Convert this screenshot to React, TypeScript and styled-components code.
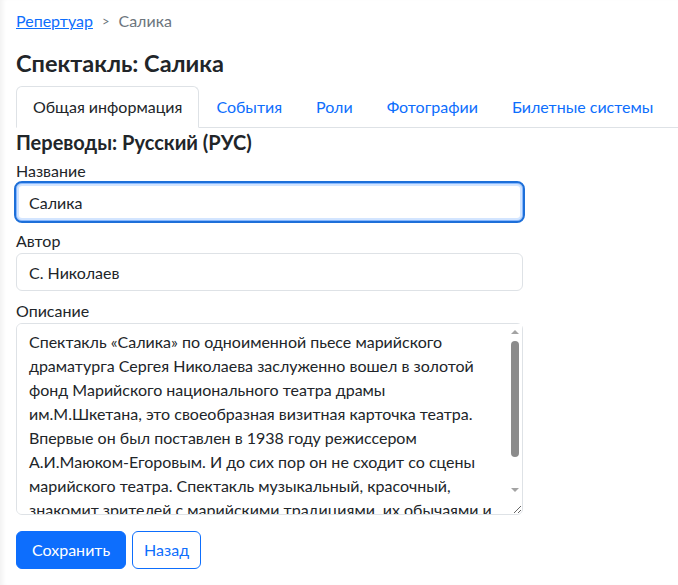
import React from "react";
import styled, { createGlobalStyle } from "styled-components";

const GlobalStyle = createGlobalStyle`
  html, body { margin: 0; padding: 0; background: #fff; }
  body {
    font-family: "Lato", "Liberation Sans", "Noto Sans", sans-serif;
    font-size: 16px;
    line-height: 1.5;
    color: #212529;
  }
  * { box-sizing: border-box; }
`;

const Page = styled.div`
  min-height: 585px;
  padding: 9px 0 16px 16px;
  box-shadow: inset 5px 0 4px -2px #f3f3f3;
`;

const Breadcrumb = styled.nav`
  display: flex;
  align-items: center;
  gap: 9px;
  font-size: 16px;
  line-height: 24px;
  color: #6c757d;
`;

const CrumbLink = styled.a`
  color: #0d6efd;
  text-decoration: underline;
  cursor: pointer;
`;

const Sep = styled.span`
  font-size: 13px;
  color: #6c757d;
`;

const Title = styled.h1`
  margin: 17px 0 9px;
  font-size: 23.5px;
  line-height: 27px;
  font-weight: 700;
  color: #212529;
`;

const Tabs = styled.ul`
  display: flex;
  list-style: none;
  margin: 0;
  padding: 0;
  border-bottom: 1px solid #dee2e6;
`;

const Tab = styled.li<{ $active?: boolean }>`
  margin-bottom: -1px;
  padding: 8px 16px;
  line-height: 24px;
  white-space: nowrap;
  border: 1px solid ${(p) => (p.$active ? "#dee2e6" : "transparent")};
  border-bottom-color: ${(p) => (p.$active ? "#fff" : "transparent")};
  border-radius: 6px 6px 0 0;
  background: ${(p) => (p.$active ? "#fff" : "transparent")};
  color: ${(p) => (p.$active ? "#212529" : "#0d6efd")};
  cursor: pointer;
`;

const Form = styled.form`
  width: 507px;
  display: flex;
  flex-direction: column;
`;

const SectionTitle = styled.h2`
  margin: 2px 0 5px;
  font-size: 20px;
  line-height: 24px;
  font-weight: 700;
`;

const Field = styled.div`
  display: flex;
  flex-direction: column;
  margin-bottom: 8px;
`;

const Label = styled.label`
  line-height: 24px;
`;

const Input = styled.input<{ $focused?: boolean }>`
  height: 38px;
  padding: 6px 12px;
  font: inherit;
  color: #212529;
  border: 1px solid ${(p) => (p.$focused ? "#86b7fe" : "#dee2e6")};
  border-radius: 6px;
  background: #fff;
  outline: ${(p) => (p.$focused ? "2px solid #1d6fd9" : "none")};
  outline-offset: 0;
  box-shadow: ${(p) => (p.$focused ? "inset 0 0 0 2px rgba(13,110,253,.18)" : "none")};
`;

const AreaWrap = styled.div`
  position: relative;
  display: flex;
  flex-direction: column;
`;

const TextArea = styled.textarea`
  height: 192px;
  padding: 6px 27px 6px 12px;
  font: inherit;
  line-height: 24px;
  color: #212529;
  border: 1px solid #dee2e6;
  border-radius: 6px;
  background: #fff;
  outline: none;
  resize: vertical;
`;

const ScrollBar = styled.div`
  position: absolute;
  top: 1px;
  right: 1px;
  bottom: 17px;
  width: 15px;
  background: #fff;
  display: flex;
  flex-direction: column;
  align-items: center;
  pointer-events: none;
`;

const Arrow = styled.div<{ $dir: "up" | "down" }>`
  width: 15px;
  height: 16px;
  flex: none;
  display: flex;
  align-items: center;
  justify-content: center;
  &::before {
    content: "";
    width: 0;
    height: 0;
    border-left: 4px solid transparent;
    border-right: 4px solid transparent;
    ${(p) =>
      p.$dir === "up"
        ? "border-bottom: 4px solid #a3a3a3;"
        : "border-top: 4px solid #a3a3a3;"}
  }
`;

const Track = styled.div`
  flex: 1;
  width: 15px;
  display: flex;
  justify-content: center;
  padding-top: 1px;
`;

const Thumb = styled.div`
  width: 8px;
  border-radius: 4px;
  background: #8b8b8b;
`;

const Actions = styled.div`
  display: flex;
  gap: 6px;
  margin-top: 8px;
`;

const Button = styled.button<{ $variant: "primary" | "outline" }>`
  height: 38px;
  padding: ${(p) => (p.$variant === "primary" ? "6px 15px" : "6px 11px")};
  font: inherit;
  line-height: 24px;
  border-radius: 6px;
  border: 1px solid #0d6efd;
  background: ${(p) => (p.$variant === "primary" ? "#0d6efd" : "#fff")};
  color: ${(p) => (p.$variant === "primary" ? "#fff" : "#0d6efd")};
  cursor: pointer;
`;

const description =
  "Спектакль «Салика» по одноименной пьесе марийского драматурга Сергея Николаева заслуженно вошел в золотой фонд Марийского национального театра драмы им.М.Шкетана, это своеобразная визитная карточка театра. Впервые он был поставлен в 1938 году режиссером А.И.Маюком-Егоровым. И до сих пор он не сходит со сцены марийского театра. Спектакль музыкальный, красочный, знакомит зрителей с марийскими традициями, их обычаями и обрядами.";

export default function App() {
  const tabs = ["Общая информация", "События", "Роли", "Фотографии", "Билетные системы"];
  const thumbHeight = 116;
  return (
    <>
      <GlobalStyle />
      <Page>
        <Breadcrumb>
          <CrumbLink>Репертуар</CrumbLink>
          <Sep>&gt;</Sep>
          <span>Салика</span>
        </Breadcrumb>
        <Title>Спектакль: Салика</Title>
        <Tabs>
          {tabs.map((t, i) => (
            <Tab key={t} $active={i === 0}>
              {t}
            </Tab>
          ))}
        </Tabs>
        <Form onSubmit={(e) => e.preventDefault()}>
          <SectionTitle>Переводы: Русский (РУС)</SectionTitle>
          <Field>
            <Label>Название</Label>
            <Input $focused defaultValue="Салика" />
          </Field>
          <Field>
            <Label>Автор</Label>
            <Input defaultValue="С. Николаев" />
          </Field>
          <Field>
            <Label>Описание</Label>
            <AreaWrap>
              <TextArea defaultValue={description} />
              <ScrollBar aria-hidden>
                <Arrow $dir="up" />
                <Track>
                  <Thumb style={{ height: thumbHeight }} />
                </Track>
                <Arrow $dir="down" />
              </ScrollBar>
            </AreaWrap>
          </Field>
          <Actions>
            <Button type="submit" $variant="primary">Сохранить</Button>
            <Button type="button" $variant="outline">Назад</Button>
          </Actions>
        </Form>
      </Page>
    </>
  );
}
